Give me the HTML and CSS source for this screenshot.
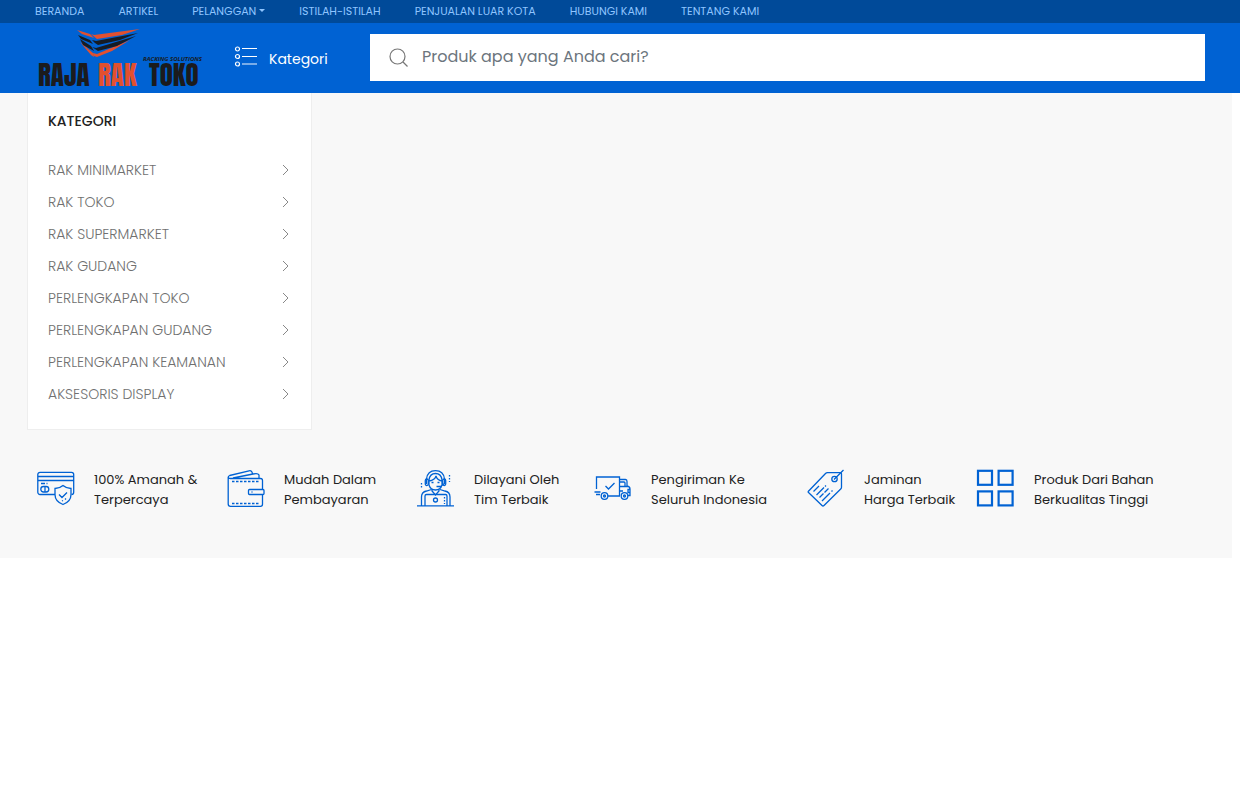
FILE: index.html
```html
<!DOCTYPE html>
<html lang="id">
<head>
<meta charset="utf-8">
<meta name="viewport" content="width=device-width, initial-scale=1">
<title>Raja Rak Toko</title>
<link rel="stylesheet" href="styles.css">
</head>
<body>
<svg class="defs" aria-hidden="true"><symbol id="chevron" viewBox="0 0 8 12"><path d="M1 1l5 5-5 5" fill="none" stroke="currentColor"/></symbol></svg>
<header>
  <nav class="topnav" aria-label="Utama">
    <a href="#">BERANDA</a>
    <a href="#">ARTIKEL</a>
    <a href="#" class="has-menu">PELANGGAN</a>
    <a href="#">ISTILAH-ISTILAH</a>
    <a href="#">PENJUALAN LUAR KOTA</a>
    <a href="#">HUBUNGI KAMI</a>
    <a href="#">TENTANG KAMI</a>
  </nav>
  <div class="masthead">
    <a class="logo" href="#" aria-label="Raja Rak Toko">
      <svg width="168" height="64" viewBox="0 0 168 64">
        <path d="M55 7l3 1 46-6-18 6-25 4zM41 3l13 4 4 4-12-4zM57 26l4 1 33-14-18 11-15 6-3-1zM44 15l13 11 1 4-3-2z" fill="#e2502f"/>
        <path d="M56 13l4 1 42-8-18 7-22 5-3-2zM42 8l12 5 3 4-12-5zM56 20l4 1 40-12-19 10-19 5-3-2zM44 12l11 7 3 5-11-6z" fill="#171c24"/>
        <text class="logo-tag" x="166" y="34" text-anchor="end">RACKING SOLUTIONS</text>
        <text class="logo-name" x="2" y="59">RAJA</text>
        <text class="logo-name logo-accent" x="62" y="59">RAK</text>
        <text class="logo-name" x="113" y="59">TOKO</text>
      </svg>
    </a>
    <button class="cat-button" type="button">
      <svg width="24" height="22" viewBox="0 0 24 22" fill="none" stroke="#fff" stroke-width="1.2"><circle cx="3.500" cy="3" r="2"/><circle cx="3.500" cy="10.500" r="2"/><circle cx="3.500" cy="18" r="2"/><path d="M8 2.500h15M8 10.500h15"/><path d="M8 18h15" opacity=".8"/></svg>
      <span>Kategori</span>
    </button>
    <form class="search" role="search">
      <svg width="20" height="20" viewBox="0 0 20 20" fill="none" stroke="#777" stroke-width="1.2"><circle cx="8.500" cy="9.500" r="7.500"/><path d="M14 15l4.500 4.500"/></svg>
      <input type="search" aria-label="Cari produk" placeholder="Produk apa yang Anda cari?">
    </form>
  </div>
</header>
<main>
  <aside class="categories">
    <h2>KATEGORI</h2>
    <ul>
      <li><a href="#">RAK MINIMARKET<svg><use href="#chevron"/></svg></a></li>
      <li><a href="#">RAK TOKO<svg><use href="#chevron"/></svg></a></li>
      <li><a href="#">RAK SUPERMARKET<svg><use href="#chevron"/></svg></a></li>
      <li><a href="#">RAK GUDANG<svg><use href="#chevron"/></svg></a></li>
      <li><a href="#">PERLENGKAPAN TOKO<svg><use href="#chevron"/></svg></a></li>
      <li><a href="#">PERLENGKAPAN GUDANG<svg><use href="#chevron"/></svg></a></li>
      <li><a href="#">PERLENGKAPAN KEAMANAN<svg><use href="#chevron"/></svg></a></li>
      <li><a href="#">AKSESORIS DISPLAY<svg><use href="#chevron"/></svg></a></li>
    </ul>
  </aside>
  <ul class="benefits">
    <li>
      <svg viewBox="0 0 38 38"><path d="M18 24.500H3a2.200 2.200 0 0 1-2.200-2.200V4.500A2.200 2.200 0 0 1 3 2.300h31.500a2.200 2.200 0 0 1 2.200 2.200v17.800q0 2.200-2.200 2.200M1 6.500h36M1 10.500h36M4 13.500h4M9.500 13.500h1"/><rect x="3.800" y="16.500" width="8" height="5.500" rx="2.700"/><path d="M8 16.500v5.500"/><path d="M26 15.500q-3.500 3-8 3v6q0 7 8 10 8-3 8-10v-6q-4.500 0-8-3zM22 24.500l3 3 5-5M25 31l1-.5M28 29.500l1-1"/></svg>
      <p>100% Amanah &amp;<br>Terpercaya</p>
    </li>
    <li>
      <svg viewBox="0 0 38 38"><path d="M35.500 19V10.500q0-2-2-2H3.500Q1.200 8.500 1.200 7v27q0 2.300 2.300 2.300h30q2 0 2-2V24M1.200 7.200q0-1.200 1.500-1.700L22 .8q3-.8 3.500 3M6 8l20-4q5-1.200 6 1v3.500"/><path d="M5 11.500h28M5 33.500h28" stroke-dasharray="2.500 1.500"/><rect x="21.500" y="19.500" width="15.500" height="5" rx="1"/><path d="M24.500 22h1"/></svg>
      <p>Mudah Dalam<br>Pembayaran</p>
    </li>
    <li>
      <svg viewBox="0 0 38 38"><path d="M0 35.800h37M4.500 35.500V27q0-5 5-6l5-1.500M33 35.500V27q0-5-5-6l-5-1.500M8 35.500V26q0-1.500 1.500-1.500h19q1.500 0 1.500 1.500v9.500"/><path d="M9.500 14V9q1-8.300 9-8.300t9 8.300v5M12 10q.8-6.500 6.500-6.500T25 10M12 10v5q1.500 5 6.500 5t6.500-5v-5M12 11q6-1 7-5 1 4 6 5M14.500 12.500h2M20.500 12.500h2M19.500 16.500h4l4-3M15 19v2l3.500 4 3.500-4v-2"/><rect x="8.300" y="9" width="3" height="6.500" rx="1.500"/><rect x="25.700" y="9" width="3" height="6.500" rx="1.500"/><circle cx="18.500" cy="30" r="2"/><path d="M4.500 13v6M32.500 5v7M27.500 27v7" stroke-dasharray="1.500 1.500"/></svg>
      <p>Dilayani Oleh<br>Tim Terbaik</p>
    </li>
    <li>
      <svg viewBox="0 0 38 38"><path d="M2.500 19V7H25.500V25.500M.5 22h6M2 24.500h4M14 26h12M26 9.500h5.500q1.500 0 1.500 2v4.500q3 .5 3 3v6.500h-2M26 12h4q1 0 1 1v3.500h-5M26 16.500h8M26 21h3M36.500 19.500h-2.500v3h2.500M11.500 16l3 3 6-6"/><circle cx="10.500" cy="26" r="3.300"/><circle cx="10.500" cy="26" r="1"/><circle cx="30.500" cy="26" r="3.300"/><circle cx="30.500" cy="26" r="1"/></svg>
      <p>Pengiriman Ke<br>Seluruh Indonesia</p>
    </li>
    <li>
      <svg viewBox="0 0 38 38"><path d="M1.200 21.500L18.500 3.500q.8-.8 2-.8H33.500q1 0 1 1v13.500q0 1-.8 1.800L17 35.500q-1 1-2 0L1.500 22.500q-.6-.5-.3-1z"/><circle cx="27.500" cy="9" r="2.700"/><path d="M27 9.500L36.500 0M6.500 21.500L12 16M9.500 25l7.500-7.500M18 16.500l1-1M12.500 27.500l4-4M17.500 22.500l4-4M15 31l8-8M24.500 21.500l1-1"/></svg>
      <p>Jaminan<br>Harga Terbaik</p>
    </li>
    <li>
      <svg viewBox="0 0 38 38"><g stroke-width="2.200"><rect x="1" y=".8" width="14" height="14"/><rect x="21.600" y=".8" width="14" height="14"/><rect x="1" y="21.400" width="14" height="14"/><rect x="21.600" y="21.400" width="14" height="14"/></g></svg>
      <p>Produk Dari Bahan<br>Berkualitas Tinggi</p>
    </li>
  </ul>
</main>
</body>
</html>
```
FILE: styles.css
```css
* { box-sizing: border-box; }
body { margin: 0; background: #fff; color: #222; font-family: Poppins, Inter, "Open Sans", sans-serif; }
a { color: inherit; text-decoration: none; }
ul { list-style: none; margin: 0; padding: 0; }
.defs { display: none; }

.topnav { display: flex; gap: 34px; padding: 0 35px; background: #004a99; color: #8fc5ff; font-size: 11px; line-height: 23px; white-space: nowrap; }
.has-menu::after { content: ""; display: inline-block; margin-left: 3px; vertical-align: 3px; border: 3px solid transparent; border-top-color: currentColor; border-bottom: 0; }

.masthead { display: flex; align-items: center; padding: 0 35px 2px; min-height: 70px; background: #0062d3; }
.logo { flex: 0 0 199px; padding: 3px 0 0 1px; }
.logo svg { display: block; overflow: visible; }
.logo-tag { font: italic bold 6px "Open Sans", sans-serif; fill: #171c24; }
.logo-name { font: 27px Anton, Impact, Oswald, "Roboto Condensed", Roboto, sans-serif; fill: #1b1b1d; }
.logo-accent { fill: #e2502f; }
.cat-button { display: flex; align-items: center; gap: 11px; flex: 0 0 136px; padding: 0; border: 0; background: none; color: #fff; font: 14px Poppins, Inter, sans-serif; cursor: pointer; }
.cat-button span { padding-top: 4px; }
.search { display: flex; align-items: center; gap: 13px; flex: 1; height: 47px; padding: 0 19px; background: #fff; }
.search input { flex: 1; min-width: 0; padding: 0 0 2px; border: 0; outline: 0; background: none; font: 16px Poppins, Inter, sans-serif; }
.search input::placeholder { color: #6c757d; opacity: 1; }

main { margin-right: 8px; padding: 0 27px 48px; background: #f8f8f8; }
.categories { width: 285px; padding: 18px 20px 19px; background: #fff; border: 1px solid #eee; border-top: 0; }
.categories h2 { margin: 0 0 23px; font-size: 14px; line-height: 20px; font-weight: 500; }
.categories a { display: flex; align-items: center; justify-content: space-between; font-size: 14px; line-height: 22px; padding: 5px 0; font-weight: 300; color: #707070; }
.categories svg { width: 8px; height: 12px; margin-right: 1px; color: #888; }

.benefits { display: grid; grid-template-columns: 190fr 190fr 177fr 213fr 170fr 228fr; padding: 40px 0 0 10px; }
.benefits li { display: flex; gap: 19px; white-space: nowrap; }
.benefits svg { flex: none; width: 38px; height: 38px; fill: none; stroke: #0062d3; stroke-width: 1.3; overflow: visible; }
.benefits p { margin: 0; font-size: 13px; line-height: 20px; }
```
